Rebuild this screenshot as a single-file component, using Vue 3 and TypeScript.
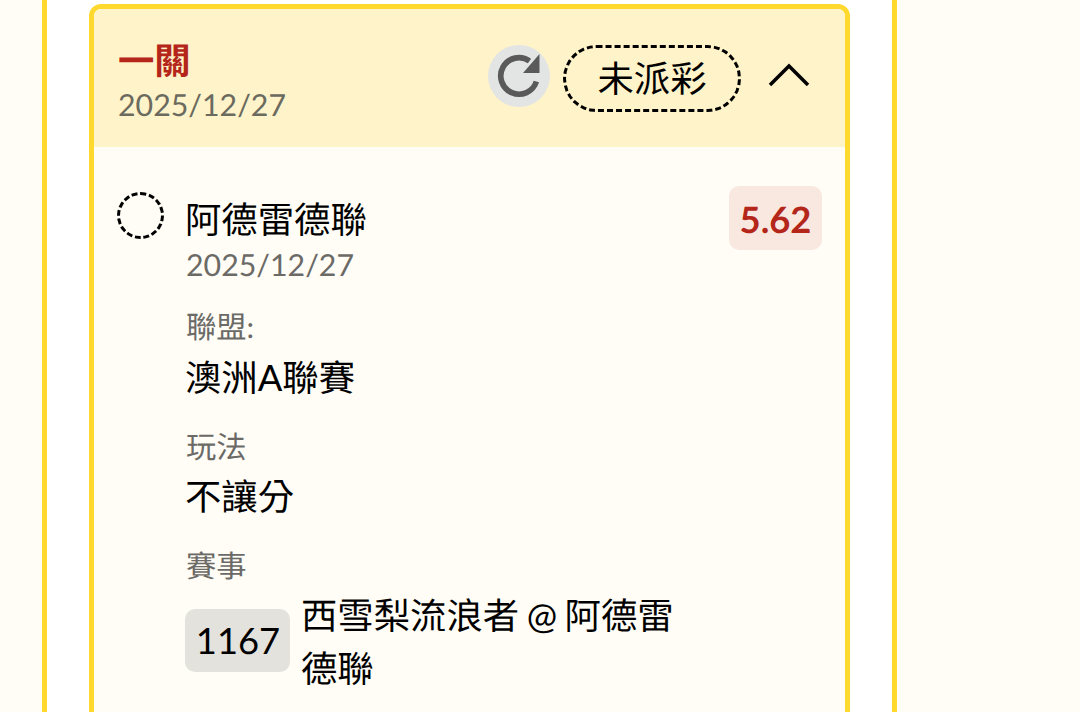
<script setup lang="ts">
const groups = [
  { label: "聯盟:", value: "澳洲A聯賽" },
  { label: "玩法", value: "不讓分" },
];
</script>

<template>
  <div class="page">
    <div class="column">
      <section class="card">
        <header class="card__head">
          <div class="head__title">
            <h2>一關</h2>
            <p>2025/12/27</p>
          </div>
          <div class="head__actions">
            <span class="refresh">
              <svg width="46" height="46" viewBox="0 0 46 46">
                <path d="M40.400 28.500A18.250 18.250 0 1 1 33.500 8" fill="none" stroke="#5a5a5a" stroke-width="5.700" />
                <path d="M27 20 43.500 1V20Z" fill="#5a5a5a" />
              </svg>
            </span>
            <span class="status">未派彩</span>
            <svg class="chevron" width="42" height="26" viewBox="0 0 42 26">
              <path d="M2 23 21 4 40 23" fill="none" stroke="#000" stroke-width="3.500" />
            </svg>
          </div>
        </header>

        <div class="card__body">
          <span class="radio"></span>
          <div class="main">
            <div class="team">
              <div>
                <div class="team__name">阿德雷德聯</div>
                <div class="team__date">2025/12/27</div>
              </div>
              <span class="odds">5.62</span>
            </div>

            <div v-for="g in groups" :key="g.label" class="group">
              <div class="group__label">{{ g.label }}</div>
              <div class="group__value">{{ g.value }}</div>
            </div>

            <div class="group">
              <div class="group__label">賽事</div>
              <div class="match">
                <span class="match__no">1167</span>
                <span class="match__name">西雪梨流浪者 @ 阿德雷德聯</span>
              </div>
            </div>
          </div>
        </div>
      </section>
    </div>
  </div>
</template>

<style>
html,
body {
  margin: 0;
  overflow: hidden;
}
</style>

<style scoped>
.page {
  height: 712px;
  overflow: hidden;
  background: #fffdf6;
  font-family: Lato, "Noto Sans CJK TC", sans-serif;
  text-rendering: geometricPrecision;
  color: #000;
}

.column {
  box-sizing: border-box;
  width: 855px;
  height: 712px;
  margin-left: 42px;
  padding: 4px 41px 0 42px;
  background: #fff;
  border-left: 5px solid #ffd92d;
  border-right: 5px solid #ffd92d;
}

.card {
  box-sizing: border-box;
  width: 761px;
  height: 900px;
  background: #fffdf6;
  border: 5px solid #ffd92d;
  border-radius: 12px;
  overflow: hidden;
}

.card__head {
  display: flex;
  justify-content: space-between;
  height: 138px;
  padding: 0 35px 0 24px;
  background: #fff3c9;
}

.head__title {
  padding-top: 28px;
}

.head__title h2 {
  margin: 0;
  font-size: 36.360px;
  line-height: 46px;
  font-weight: 700;
  color: #b4261a;
}

.head__title p {
  margin: 0;
  font-size: 30.300px;
  line-height: 44px;
  color: #6b6a5e;
}

.head__actions {
  display: flex;
  align-items: center;
}

.refresh {
  display: flex;
  align-items: center;
  justify-content: center;
  width: 62px;
  height: 62px;
  margin-bottom: 4px;
  border-radius: 50%;
  background: #e3e4e4;
}

.status {
  box-sizing: border-box;
  width: 178px;
  height: 67px;
  margin: 0 27px 0 13px;
  border: 3px dashed #000;
  border-radius: 34px;
  font-size: 36.360px;
  line-height: 61px;
  text-align: center;
}

.chevron {
  margin-bottom: 7px;
}

.card__body {
  display: flex;
  padding: 39px 23px 0 23px;
}

.radio {
  flex: none;
  box-sizing: border-box;
  width: 47px;
  height: 47px;
  margin-top: 6px;
  border: 3px dashed #000;
  border-radius: 50%;
}

.main {
  flex: 1;
  margin-left: 21px;
}

.team {
  display: flex;
  justify-content: space-between;
}

.team__name {
  margin-top: 10px;
  font-size: 36.360px;
  line-height: 46px;
}

.team__date {
  margin: 1px 0 -1px 1px;
  font-size: 30.300px;
  line-height: 44px;
  color: #6b6a66;
}

.odds {
  align-self: flex-start;
  box-sizing: border-box;
  width: 93px;
  height: 64px;
  border-radius: 10px;
  background: #f8e8e0;
  color: #b4261a;
  font-size: 36.360px;
  font-weight: 700;
  line-height: 66px;
  text-align: center;
}

.group {
  margin-top: 19px;
}

.group + .group {
  margin-top: 20px;
}

.group__label {
  margin-left: 1px;
  font-size: 30.300px;
  line-height: 44px;
  color: #6b6a66;
}

.group + .group .group__label {
  margin-bottom: -1px;
}

.group__value {
  font-size: 36.360px;
  line-height: 56px;
}

.match {
  display: flex;
  align-items: center;
  gap: 11px;
  width: 510px;
}

.match__no {
  flex: none;
  box-sizing: border-box;
  width: 105px;
  height: 63px;
  margin-bottom: 2px;
  padding-left: 1px;
  border-radius: 10px;
  background: #e4e2dd;
  font-size: 36.360px;
  line-height: 63px;
  text-align: center;
}

.match__name {
  padding-top: 2px;
  font-size: 36.360px;
  line-height: 53px;
  word-spacing: -1.800px;
}
</style>
